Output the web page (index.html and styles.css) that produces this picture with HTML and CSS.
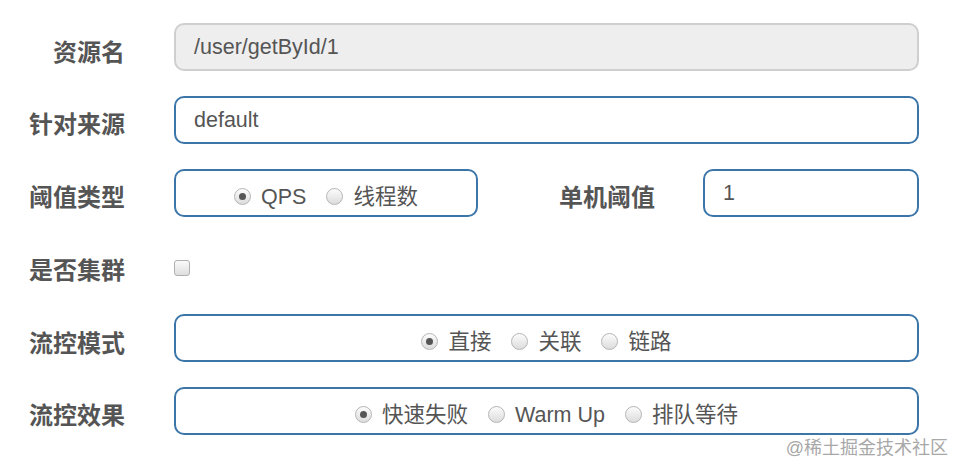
FILE: index.html
```html
<!DOCTYPE html>
<html lang="zh">
<head>
<meta charset="utf-8">
<title>流控规则</title>
<link rel="stylesheet" href="styles.css">
</head>
<body>
<form class="rule_form">
  <div class="row">
    <label class="lbl">资源名</label>
    <input class="field readonly" type="text" value="/user/getById/1" readonly>
  </div>
  <div class="row">
    <label class="lbl">针对来源</label>
    <input class="field" type="text" value="default">
  </div>
  <div class="row">
    <label class="lbl">阈值类型</label>
    <div class="split">
      <div class="box">
        <label class="opt"><input type="radio" name="grade" checked>QPS</label>
        <label class="opt"><input type="radio" name="grade">线程数</label>
      </div>
      <label class="lbl mid">单机阈值</label>
      <input class="field" type="text" value="1">
    </div>
  </div>
  <div class="row">
    <label class="lbl">是否集群</label>
    <div class="check_cell"><input type="checkbox" class="check"></div>
  </div>
  <div class="row">
    <label class="lbl">流控模式</label>
    <div class="box">
      <label class="opt"><input type="radio" name="mode" checked>直接</label>
      <label class="opt"><input type="radio" name="mode">关联</label>
      <label class="opt"><input type="radio" name="mode">链路</label>
    </div>
  </div>
  <div class="row">
    <label class="lbl">流控效果</label>
    <div class="box">
      <label class="opt"><input type="radio" name="effect" checked>快速失败</label>
      <label class="opt"><input type="radio" name="effect">Warm Up</label>
      <label class="opt"><input type="radio" name="effect">排队等待</label>
    </div>
  </div>
</form>
<div class="mark">@稀土掘金技术社区</div>
</body>
</html>
```

FILE: styles.css
```css
html, body { margin: 0; background: #fff; }
body { font-family: "Liberation Sans", "Noto Sans CJK SC", sans-serif; color: #555; width: 964px; height: 472px; position: relative; overflow: hidden; }

.rule_form { display: flex; flex-direction: column; gap: 24.8px; padding-top: 23px; }
.row { display: grid; grid-template-columns: 125px 745px; column-gap: 49px; height: 48px; align-items: center; }

.lbl { font-size: 24px; font-weight: bold; color: #555; text-align: right; white-space: nowrap; padding-top: 6px; }

.field { box-sizing: border-box; height: 48px; width: 100%; margin: 0; padding: 1px 18px 0; border: 2px solid #3c76a9; border-radius: 10px; font: 21.5px "Liberation Sans", "Noto Sans CJK SC", sans-serif; color: #555; background: #fff; outline: none; }
.field.readonly { background: #eee; border-color: #cfcfcf; }

/* threshold row: radio box, label, count input */
.split { display: grid; grid-template-columns: 304px 1fr 216px; align-items: center; height: 48px; }
.split .mid { padding-right: 48px; }

.box { box-sizing: border-box; height: 48px; padding-top: 8px; border: 2px solid #3c76a9; border-radius: 10px; text-align: center; white-space: nowrap; font-size: 21.5px; line-height: 36px; }
.opt { color: #555; margin: 0 7px; }
.opt input { appearance: none; -webkit-appearance: none; margin: 0 10px 0 0; width: 17px; height: 17px; vertical-align: -1px; border-radius: 50%; border: 1px solid #b5b5b5; background: linear-gradient(#fcfcfc, #dcdcdc); box-sizing: border-box; position: relative; }
.opt input:checked::after { content: ""; position: absolute; left: 4px; top: 4px; width: 7px; height: 7px; border-radius: 50%; background: #555; }

.check_cell { display: flex; align-items: center; padding-top: 6px; }
.check { appearance: none; -webkit-appearance: none; margin: 0; width: 16px; height: 16px; border: 1px solid #b0b0b0; border-radius: 3px; background: linear-gradient(#fafafa, #dedede); box-sizing: border-box; }

.mark { position: absolute; right: 16px; top: 433px; font-size: 18px; color: #a8a8a8; white-space: nowrap; }
```
